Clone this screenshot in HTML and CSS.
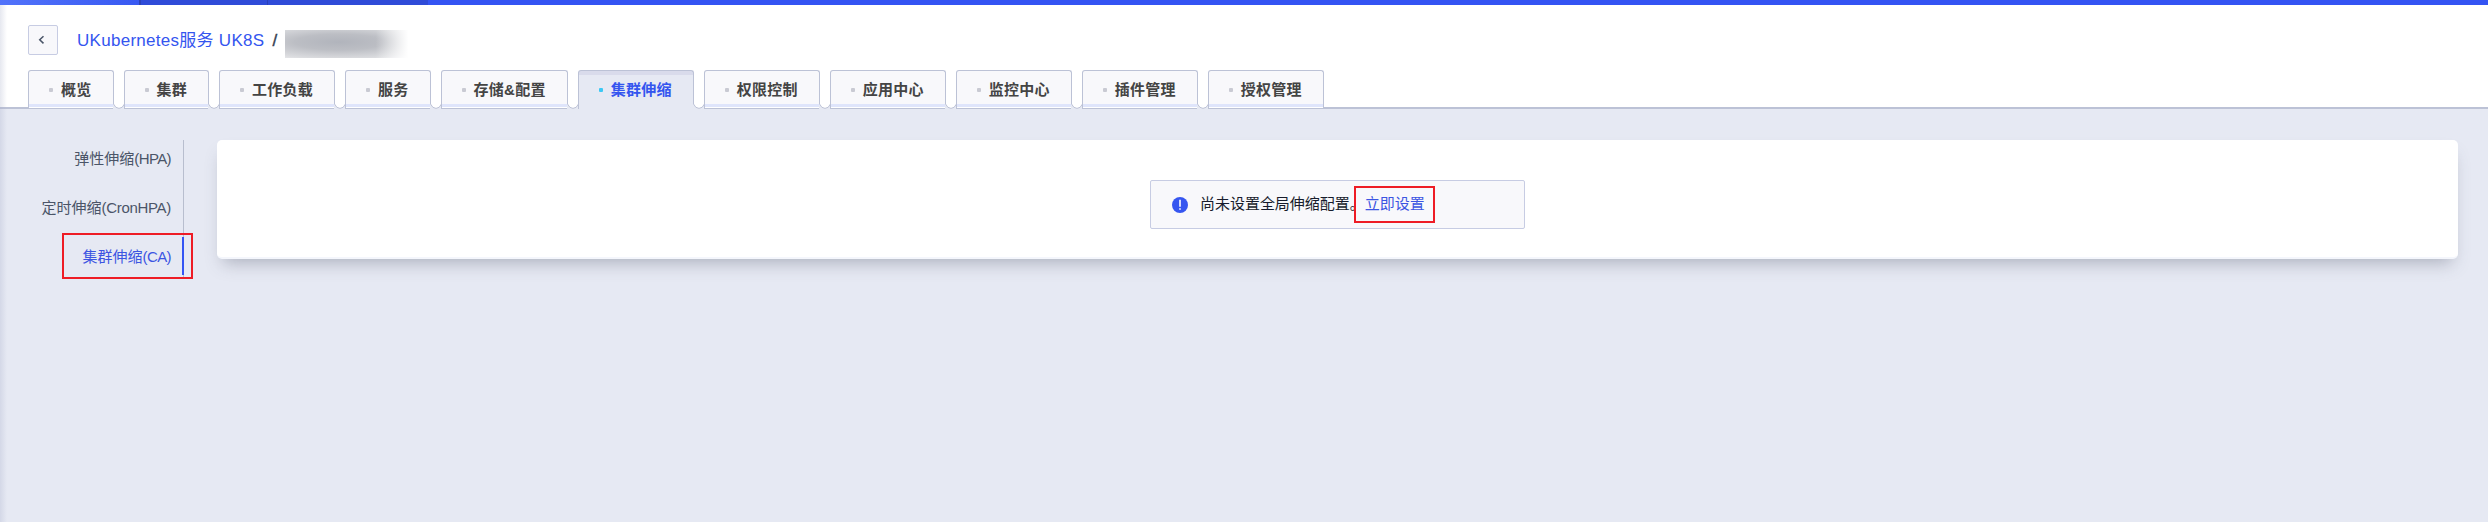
FILE: index.html
```html
<!DOCTYPE html>
<html lang="zh-CN">
<head>
<meta charset="utf-8">
<title>UKubernetes服务 UK8S</title>
<link rel="stylesheet" href="styles.css">
</head>
<body>
<svg width="0" height="0" class="defs"><symbol id="valley" viewBox="0 0 12 5"><path d="M.5 0Q2.5 4.4 6 4.4T11.5 0Z" fill="#fff"/><path d="M.5 0Q2.5 4.4 6 4.4T11.5 0" fill="none" stroke="#bcc2d6"/></symbol></svg>
<div class="topbar"><span class="brand"></span><span class="region"></span><span class="project"></span></div>
<header class="header">
  <div class="crumbs">
    <button class="back" aria-label="返回"><svg width="8" height="10" viewBox="0 0 8 10"><path d="M5.5 1.2 1.7 4.8 5.5 8.4" fill="none" stroke="#4a5568" stroke-width="1.5"/></svg></button>
    <a class="crumb">UKubernetes服务 UK8S</a><span class="slash">/</span><span class="cluster"></span>
  </div>
  <nav class="tabs">
    <a class="tab">概览<svg class="valley"><use href="#valley"/></svg></a>
    <a class="tab">集群<svg class="valley"><use href="#valley"/></svg></a>
    <a class="tab">工作负载<svg class="valley"><use href="#valley"/></svg></a>
    <a class="tab">服务<svg class="valley"><use href="#valley"/></svg></a>
    <a class="tab">存储&amp;配置<svg class="valley"><use href="#valley"/></svg></a>
    <a class="tab active">集群伸缩<svg class="valley"><use href="#valley"/></svg></a>
    <a class="tab">权限控制<svg class="valley"><use href="#valley"/></svg></a>
    <a class="tab">应用中心<svg class="valley"><use href="#valley"/></svg></a>
    <a class="tab">监控中心<svg class="valley"><use href="#valley"/></svg></a>
    <a class="tab">插件管理<svg class="valley"><use href="#valley"/></svg></a>
    <a class="tab">授权管理</a>
  </nav>
</header>
<main class="main">
  <nav class="side">
    <a class="item">弹性伸缩<span class="latin">(HPA)</span></a>
    <a class="item">定时伸缩<span class="latin wide">(CronHPA)</span></a>
    <a class="item current">集群伸缩<span class="latin">(CA)</span><span class="mark mark-side"></span></a>
  </nav>
  <section class="card">
    <div class="notice">
      <svg class="info" width="16" height="16" viewBox="0 0 16 16"><circle cx="8" cy="8" r="8" fill="#3656f0"/><path d="M8 2.8v7" stroke="#fff" stroke-width="1.6"/><path d="M8 11.2v1.6" stroke="#fff" stroke-width="1.6"/></svg>
      <span class="message">尚未设置全局伸缩配置。</span><a class="setup">立即设置<span class="mark mark-setup"></span></a>
    </div>
  </section>
</main>
<div class="edge"></div>
</body>
</html>
```
FILE: styles.css
```css
* { box-sizing: border-box; }
body {
  margin: 0;
  height: 522px;
  overflow: hidden;
  display: flex;
  flex-direction: column;
  background: #e6e9f3;
  font: 15px/20px "Liberation Sans", "Noto Sans CJK SC", sans-serif;
  color: #4b5568;
}
.defs { position: absolute; }
.topbar { display: flex; height: 5px; background: #3454f3; }
.brand { width: 139px; background: linear-gradient(90deg, #5273fa, #3859f2); }
.region { width: 128px; background: #2f4bd8; border-left: 2px solid #2b42b9; }
.project { width: 161px; background: #2f4bd8; border-left: 1px solid #2940b8; }
.header {
  height: 104px;
  padding: 20px 28px 0;
  background: #fff;
  border-bottom: 2px solid #bcc2d6;
}
.crumbs { display: flex; align-items: center; height: 30px; }
.back {
  display: flex;
  align-items: center;
  justify-content: center;
  width: 30px;
  height: 30px;
  padding: 0 2px 1px 0;
  background: #f8f8fb;
  border: 1px solid #c7cce3;
  border-radius: 2px;
}
.crumb { margin-left: 19px; padding-top: 2px; font-size: 17px; line-height: 30px; color: #3455ef; white-space: nowrap; letter-spacing: .28px; }
.slash { width: 5px; margin-left: 8px; padding-top: 2px; font-size: 17px; color: #354052; -webkit-text-stroke: .4px #354052; }
.cluster {
  width: 126px;
  height: 28px;
  margin: 7px 0 0 8px;
  background:
    linear-gradient(90deg, transparent 72%, #fff 98%),
    radial-gradient(ellipse 110px 20px at 54px 12px, #b1b4bc 0%, #bcbec4 40%, #dcdde0 85%, #ebebee 100%);
}
.tabs { display: flex; gap: 10px; margin-top: 15px; height: 39px; }
.tab {
  position: relative;
  display: flex;
  align-items: center;
  height: 39px;
  padding: 0 21px 1px 20px;
  background: linear-gradient(#f8f8fb 33px, #dfe5fb 33px, #dfe5fb 36px, #fff 36px, #fff 37px, #bcc2d6 37px);
  border: 1px solid #bcc2d6;
  border-bottom: 0;
  border-radius: 3px 3px 0 0;
  color: #444;
  font-weight: 600;
  letter-spacing: .25px;
  white-space: nowrap;
}
.tab::before { content: ""; width: 4px; height: 4px; margin-right: 8px; border-radius: 1px; background: #c9cad3; }
/* rounded valley that joins neighbouring tabs */
.valley {
  position: absolute;
  left: 100%;
  top: 33px;
  width: 12px;
  height: 5px;
  background: #e6e9f3;
}
.tab.active {
  background: linear-gradient(#d9dbeb 4px, #e6e9f3 4px);
  color: #3455ef;
}
.tab.active::before { background: #3cc8f4; }
.main { display: flex; flex: 1; padding: 31px 30px 0 0; }
.side {
  display: flex;
  flex-direction: column;
  width: 184px;
  height: 137px;
  border-right: 1px solid #b8bece;
}
.item { position: relative; height: 49px; padding: 9px 12px 0 0; text-align: right; flex: none; }
.latin { letter-spacing: -.6px; }
.latin.wide { letter-spacing: -.3px; }
.item.current { color: #3c55e2; }
.item.current::after { content: ""; position: absolute; right: -1px; top: -1px; width: 2px; height: 38px; background: #3454f3; }
.mark { position: absolute; border: 2px solid #ee1c25; }
.mark-side { left: 62px; top: -5px; width: 131px; height: 46px; }
.card {
  flex: 1;
  height: 119px;
  margin-left: 33px;
  padding-top: 40px;
  background: #fff;
  border-bottom: 2px solid #f4f6fc;
  border-radius: 5px;
  box-shadow: 0 10px 16px -6px rgba(70, 75, 95, .35);
}
.notice {
  display: flex;
  align-items: center;
  width: 375px;
  height: 49px;
  margin: 0 auto;
  padding-left: 21px;
  background: #f8f8fb;
  border: 1px solid #c7cce3;
  border-radius: 2px;
  color: #171c2c;
}
.message { margin-left: 12px; padding-bottom: 2px; letter-spacing: -.03px; }
.setup { position: relative; padding-bottom: 2px; color: #3c55e2; }
.mark-setup { left: -11px; top: -8px; width: 81px; height: 37px; background: linear-gradient(90deg, #f8f8fb 8px, transparent 8px); }
.edge {
  position: absolute;
  left: 0;
  top: 5px;
  bottom: 0;
  width: 7px;
  background: linear-gradient(90deg, rgba(165, 172, 200, .28), transparent);
}
```
